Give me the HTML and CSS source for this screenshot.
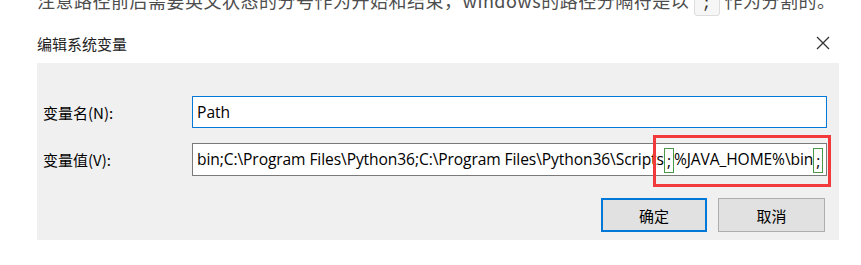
FILE: index.html
```html
<!DOCTYPE html>
<html lang="zh-CN">
<head>
    <meta charset="UTF-8">
    <title>编辑系统变量</title>
    <link rel="stylesheet" href="styles.css">
</head>
<body>
    <div class="page">
        <p class="note">注意路径前后需要英文状态的分号作为开始和结束，windows的路径分隔符是以 <code>;</code> 作为分割的。</p>

        <!-- dialog -->
        <div class="dialog">
            <div class="dialog-head">
                <span class="dialog-title">编辑系统变量</span>
                <svg class="close" width="14" height="14" viewBox="0 0 14 14">
                    <path d="M1 1 L13 13 M13 1 L1 13" stroke="#333" stroke-width="1.3" fill="none"/>
                </svg>
            </div>
            <div class="panel">
                <div class="row">
                    <label class="label">变量名(N):</label>
                    <div class="field focused">Path</div>
                </div>
                <div class="row row-value">
                    <label class="label">变量值(V):</label>
                    <div class="field">bin;C:\Program Files\Python36;C:\Program Files\Python36\Scripts<span class="mark"><span class="semi">;</span>%JAVA_HOME%\bin<span class="semi">;</span></span></div>
                </div>
                <div class="actions">
                    <button class="btn btn-default">确定</button>
                    <button class="btn">取消</button>
                </div>
            </div>
        </div>

        <p class="next">第二步 新建变量</p>
    </div>
</body>
</html>
```

FILE: styles.css
```css
body {
    margin: 0;
    background: #fff;
    overflow: hidden;
}

.page {
    padding: 0 22px 0 37px;
}

.note {
    margin: -12px 0 0;
    font: 18px/24px "Noto Sans CJK SC", "Liberation Serif", serif;
    letter-spacing: 0.5px;
    color: #4d4d4d;
    white-space: nowrap;
}

.note code {
    display: inline-block;
    padding: 0 7px;
    font: 16px/22px "Liberation Mono", monospace;
    background: #f6f6f6;
    border: 1px solid #ddd;
    border-radius: 3px;
    color: #333;
}

.dialog {
    width: 802px;
    font-family: "Noto Sans CJK SC", "Noto Sans", sans-serif;
}

.dialog-head {
    display: flex;
    align-items: center;
    justify-content: space-between;
    box-sizing: border-box;
    height: 47px;
    padding: 8px 0 2px;
}

.dialog-title {
    font-size: 15px;
    color: #222;
    margin-top: 2px;
}

.close {
    margin-right: 9px;
}

.panel {
    background: #f0f0f0;
    padding: 33px 12px 8px 6px;
}

.row {
    display: flex;
    align-items: center;
}

.row-value {
    margin-top: 15px;
}

.label {
    width: 149px;
    font-size: 15px;
    color: #000;
}

.field {
    flex: 1;
    height: 31px;
    padding-left: 4px;
    background: #fff;
    border: 1px solid #7a7a7a;
    font: 15.6px/31px "Open Sans", "Noto Sans", sans-serif;
    color: #000;
    white-space: nowrap;
}

.row-value .field {
    letter-spacing: -0.1px;
}

.focused {
    height: 30px;
    line-height: 30px;
    border-color: #0078d7;
}

.mark {
    position: relative;
}

.mark::before {
    content: "";
    position: absolute;
    left: -11px;
    right: -8px;
    top: -13px;
    bottom: -17px;
    border: 3px solid #f2393b;
}

.semi {
    display: inline-block;
    width: 10px;
    height: 25px;
    line-height: 25px;
    vertical-align: middle;
    text-align: center;
    border: 1px solid #4a9a4a;
    box-sizing: border-box;
}

.actions {
    display: flex;
    justify-content: flex-end;
    gap: 11px;
    margin-top: 22px;
    padding-right: 2px;
}

.btn {
    width: 107px;
    height: 34px;
    background: #e1e1e1;
    border: 1px solid #adadad;
    font: 15px "Noto Sans CJK SC", sans-serif;
    color: #000;
    padding: 0;
}

.btn-default {
    width: 106px;
    border: 2px solid #0078d7;
}

.next {
    margin: 24px 0 0 4px;
    font: 18px/24px "Noto Sans CJK SC", sans-serif;
    color: #4d4d4d;
}
```
